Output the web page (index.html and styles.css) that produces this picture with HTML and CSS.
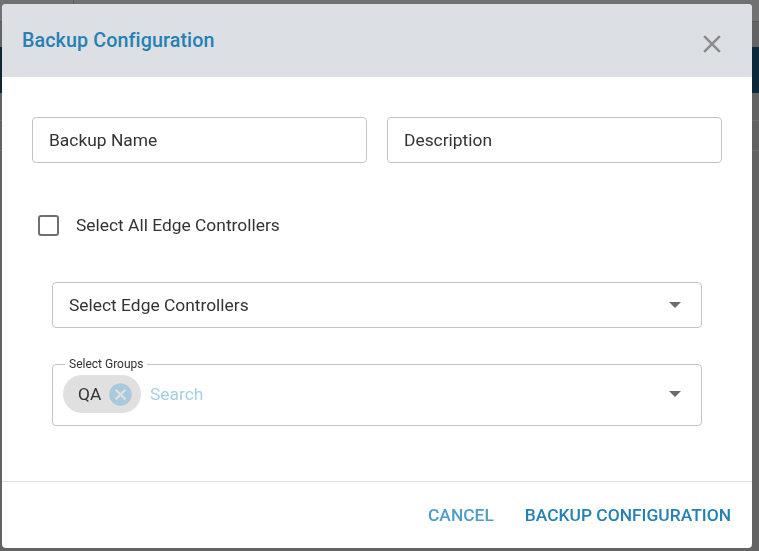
FILE: index.html
```html
<!DOCTYPE html>
<html>
<head>
<meta charset="utf-8">
<link rel="stylesheet" href="styles.css">
</head>
<body>
<div class="page">
  <div class="topbar"><div class="topbar-cell"></div></div>
  <div class="navband"></div>
  <div class="row-line first"></div>
  <div class="row-line second"></div>
</div>

<div class="modal">
  <div class="modal-header">
    <h2 class="modal-title">Backup Configuration</h2>
    <svg class="close-icon" viewBox="0 0 24 24" width="30" height="30"><path d="M19 6.41 17.59 5 12 10.59 6.41 5 5 6.41 10.59 12 5 17.59 6.41 19 12 13.41 17.59 19 19 17.59 13.41 12z" fill="#8c8c8c"/></svg>
  </div>
  <div class="modal-body">
    <div class="field-row">
      <div class="text-field">Backup Name</div>
      <div class="text-field">Description</div>
    </div>
    <label class="check-row">
      <span class="checkbox"></span>
      <span class="check-label">Select All Edge Controllers</span>
    </label>
    <div class="select-field">
      <span>Select Edge Controllers</span>
      <span class="caret"></span>
    </div>
    <fieldset class="group-field">
      <legend>Select Groups</legend>
      <div class="group-inner">
        <div class="chip">
          <span class="chip-label">QA</span>
          <svg class="chip-del" viewBox="0 0 24 24" width="24" height="24"><path d="M12 2C6.470 2 2 6.47 2 12s4.47 10 10 10 10-4.47 10-10S17.53 2 12 2zm5 13.59L15.59 17 12 13.41 8.41 17 7 15.59 10.590 12 7 8.41 8.41 7 12 10.59 15.59 7 17 8.41 13.41 12 17 15.59z" fill="#a9c9dc"/></svg>
        </div>
        <span class="search">Search</span>
        <span class="caret"></span>
      </div>
    </fieldset>
  </div>
  <div class="modal-footer">
    <button class="btn btn-cancel">Cancel</button>
    <button class="btn btn-primary">Backup Configuration</button>
  </div>
</div>
</body>
</html>
```

FILE: styles.css
```css
* { box-sizing: border-box; }
html, body {
  margin: 0;
  padding: 0;
  width: 759px;
  height: 551px;
  overflow: hidden;
  background: #636363;
  font-family: Roboto, "Liberation Sans", sans-serif;
}
.page {
  display: flex;
  flex-direction: column;
  height: 551px;
}
.topbar {
  height: 22px;
  background: #717171;
  border-bottom: 1px solid #5a5a5a;
  display: flex;
}
.topbar-cell {
  width: 74px;
  border-right: 1px solid #5a5a5a;
}
.navband {
  margin-top: 25px;
  height: 46px;
  background: #0d2838;
}
.row-line {
  height: 1px;
  background: #707070;
}
.row-line.first { margin-top: 27px; }
.row-line.second { margin-top: 29px; }

.modal {
  position: fixed;
  left: 2px;
  top: 4px;
  width: 750px;
  height: 544px;
  background: #fff;
  border-radius: 4px;
  overflow: hidden;
  display: flex;
  flex-direction: column;
}
.modal-header {
  height: 73px;
  flex: none;
  background: #dce0e4;
  display: flex;
  align-items: center;
  justify-content: space-between;
  padding: 0 25px 0 20px;
}
.modal-title {
  margin: 0;
  font-size: 19.7px;
  font-weight: 500;
  color: #2580b3;
  letter-spacing: 0.1px;
}
.close-icon {
  display: block;
  margin-top: 6px;
}
.modal-body {
  flex: 1;
  padding: 40px 30px 0 30px;
}
.field-row {
  display: flex;
  gap: 20px;
}
.text-field {
  flex: 1;
  height: 46px;
  border: 1px solid #c4c4c4;
  border-radius: 4px;
  display: flex;
  align-items: center;
  padding-left: 16px;
  font-size: 17.4px;
  color: #333;
}
.check-row {
  display: flex;
  align-items: center;
  margin-top: 51px;
  margin-left: 6px;
  height: 22px;
}
.checkbox {
  width: 21px;
  height: 21px;
  border: 2px solid #707070;
  border-radius: 3px;
}
.check-label {
  margin-left: 17px;
  font-size: 17.4px;
  color: #333;
}
.select-field {
  margin: 46px 20px 0 20px;
  height: 46px;
  border: 1px solid #c4c4c4;
  border-radius: 4px;
  display: flex;
  align-items: center;
  justify-content: space-between;
  padding: 0 20px 0 16px;
  font-size: 17.4px;
  color: #333;
}
.caret {
  width: 0;
  height: 0;
  border-left: 6px solid transparent;
  border-right: 6px solid transparent;
  border-top: 6px solid #6b6b6b;
}
.group-field {
  margin: 29px 20px 0 20px;
  height: 69px;
  border: 1px solid #c4c4c4;
  border-radius: 4px;
  padding: 0 20px 0 10px;
}
.group-field legend {
  font-size: 12px;
  color: #333;
  padding: 0 4px;
  margin-left: 2px;
  line-height: 14px;
}
.group-inner {
  display: flex;
  align-items: center;
  height: 52px;
  margin-top: -3px;
}
.chip {
  display: flex;
  align-items: center;
  height: 38px;
  width: 78px;
  border-radius: 19px;
  background: #e0e0e0;
  padding-left: 15px;
}
.chip-label {
  font-size: 17.4px;
  color: #333;
}
.chip-del {
  margin-left: 6px;
  width: 27px;
  height: 27px;
}
.search {
  flex: 1;
  margin-left: 9px;
  font-size: 17.4px;
  color: #a6cfe6;
}
.modal-footer {
  flex: none;
  height: 67px;
  border-top: 1px solid #e0e0e0;
  display: flex;
  align-items: center;
  justify-content: flex-end;
  padding: 0 21px 0 0;
  gap: 31px;
}
.btn {
  border: none;
  background: none;
  padding: 0;
  font-family: Roboto, "Liberation Sans", sans-serif;
  font-size: 17.4px;
  font-weight: 500;
  text-transform: uppercase;
}
.btn-cancel { color: #4d9dc7; }
.btn-primary { color: #2580b3; }
```
